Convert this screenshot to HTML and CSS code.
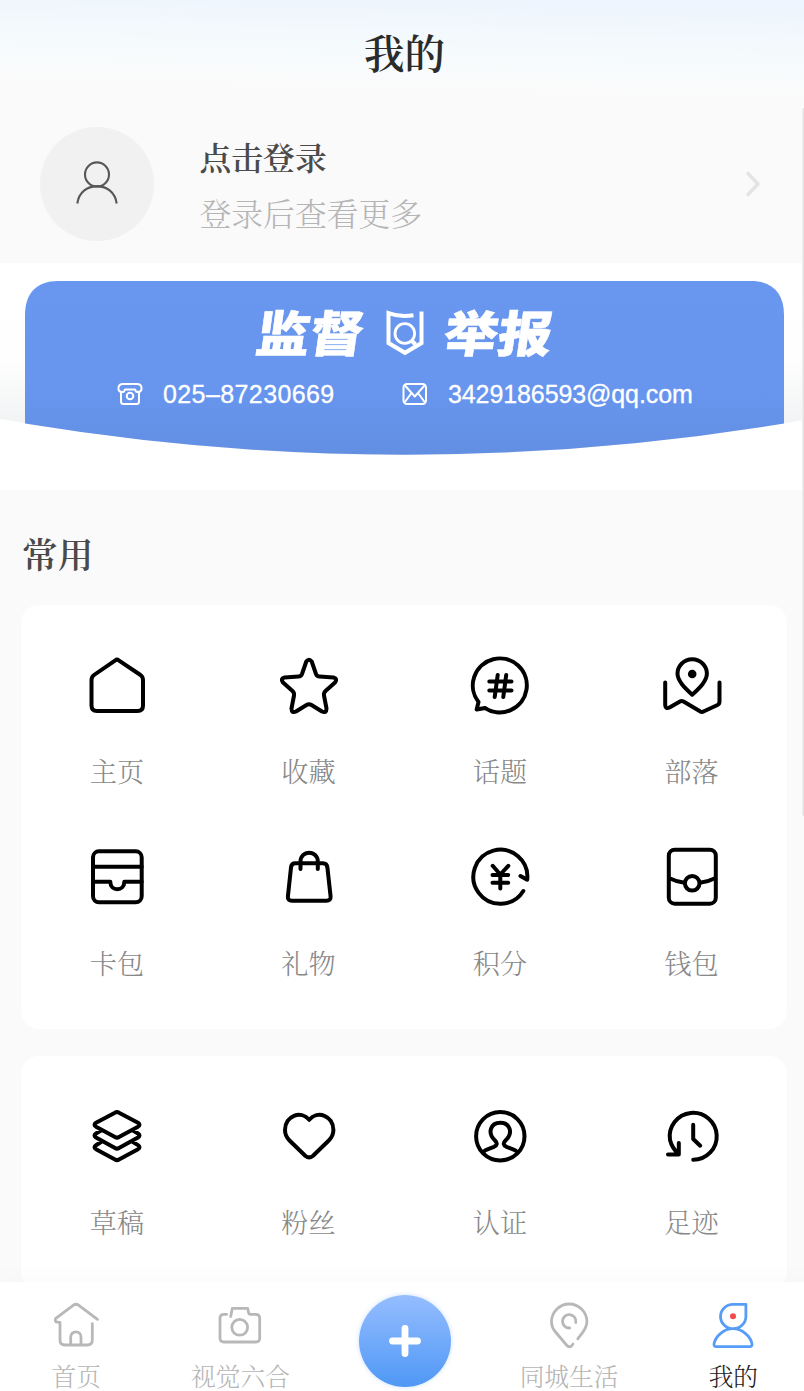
FILE: index.html
```html
<!DOCTYPE html>
<html lang="zh-CN">
<head>
<meta charset="utf-8">
<meta name="viewport" content="width=device-width, initial-scale=1">
<title>我的</title>
<link rel="stylesheet" href="styles.css">
</head>
<body>
<div class="app">
  <main class="page">
    <header class="header"><h1 class="header-title">我的</h1></header>

    <section class="profile">
      <div class="avatar">
        <svg width="48" height="48" viewBox="0 0 48 48"><circle cx="24" cy="14.4" r="12"/><path d="M4.3 43.5C6 32 14 26.4 24 26.4S42 32 43.7 43.5"/></svg>
      </div>
      <div class="profile-text">
        <div class="profile-name">点击登录</div>
        <div class="profile-hint">登录后查看更多</div>
      </div>
      <svg class="chevron" width="20" height="30" viewBox="0 0 20 30"><path d="M4 4.500 14 15 4 25.500"/></svg>
    </section>

    <section class="banner">
      <svg class="banner-bg" width="809" height="227" viewBox="0 0 809 227">
        <defs>
          <linearGradient id="blue" x1="0" y1="0" x2="0" y2="1"><stop offset="0" stop-color="#6997f0"/><stop offset=".6" stop-color="#6896ef"/><stop offset="1" stop-color="#628fe2"/></linearGradient>
          <linearGradient id="fade" x1="0" y1="0" x2="0" y2="1"><stop offset="0" stop-color="#fff"/><stop offset=".45" stop-color="#fefefe"/><stop offset="1" stop-color="#eceeef"/></linearGradient>
        </defs>
        <path fill="url(#fade)" d="M0 18H809V156Q404.500 228 0 156Z"/>
        <path fill="url(#blue)" d="M25 52C25 30 37 18 58 18H751C772 18 784 30 784 52V160.500Q594 191.700 404.500 191.700T25 160.500Z"/>
      </svg>
      <div class="banner-content">
        <div class="banner-title">
          <span class="slant">监督</span>
          <svg class="shield" width="40" height="48" viewBox="0 0 40 48"><path d="M28.500 6.200Q15 8.500 3.500 4.200V34L20 43.800 36.500 34V2.500"/><circle class="lens" cx="19.800" cy="24.500" r="9.800"/><path d="M26.500 31.500 30.500 35.500"/></svg>
          <span class="slant">举报</span>
        </div>
        <div class="banner-contacts">
          <svg width="26" height="24" viewBox="0 0 26 24"><path d="M4 10V19.500Q4 22 6.500 22H19.500Q22 22 22 19.500V10M3 9.500Q1 8.500 1.500 5.500 2 2 6 2H20Q24 2 24.500 5.500 25 8.500 23 9.500 21 10.500 19 9.500L18 7.500H8L7 9.500Q5 10.500 3 9.500Z"/><circle cx="13" cy="14" r="3.300"/></svg>
          <span class="phone">025–87230669</span>
          <svg width="26" height="24" viewBox="0 0 26 24"><rect x="1.500" y="2" width="22.500" height="20" rx="3.500"/><path d="M3 3.500 12.800 14.500 22.500 3.500M2.500 20.500 9.500 11M23 20.500 16 11"/></svg>
          <span class="mail">3429186593@qq.com</span>
        </div>
      </div>
    </section>

    <h2 class="section-title">常用</h2>

    <section class="card">
      <a class="item"><svg class="icon" viewBox="0 0 64 64"><path d="M30.300 6.300Q32 5 33.700 6.300L55.500 21Q58 22.800 58 26V51.500Q58 57 52.500 57H12Q6.500 57 6.500 51.500V26Q6.500 22.800 9 21Z"/></svg><span>主页</span></a>
      <a class="item"><svg class="icon" viewBox="0 0 64 64"><path d="M29.300 7.500Q32 4 34.700 7.500L39 20Q40 22.500 42.500 22.500L56.500 23.500Q61 24.500 58 28.500L48.500 37Q46.500 39 47 41.500L49.500 54.500Q49.500 59.500 45 57.500L34.500 51Q32 49.500 29.500 51L19 57.500Q14.500 59.500 14.500 54.500L17 41.500Q17.500 39 15.500 37L6 28.500Q3 24.500 7.500 23.500L21.500 22.500Q24 22.500 25 20Z"/></svg><span>收藏</span></a>
      <a class="item"><svg class="icon" viewBox="0 0 64 64"><path d="M17 54A27 27 0 1 0 10.500 48L8.700 55.500Z"/><path d="M21.300 27.500H43.500M21.300 36.500H43.500M29.700 21 26.700 43M38.200 21 35.300 43"/></svg><span>话题</span></a>
      <a class="item"><svg class="icon" viewBox="0 0 64 64"><path d="M32.200 40.700C25 34 17.500 27 17.500 19.500A14.700 14.200 0 0 1 46.900 19.500C46.900 27 39.500 34 32.200 40.700ZM5.200 28.500V51Q5.500 55.500 9.500 53.500L20 47.500Q21.500 46.500 23.500 47.500L40 57.300Q41.800 58.500 43.500 57.500L57.500 51Q59.500 50 59.500 47.500V28.500"/><circle class="solid" cx="32.200" cy="20" r="4.300"/></svg><span>部落</span></a>
      <a class="item"><svg class="icon" viewBox="0 0 64 64"><rect x="8" y="6.300" width="48.700" height="51" rx="6"/><path d="M8 21.700H56.700M8 36.700H25.300C25.300 46.800 39.300 46.800 39.300 36.700H56.700"/></svg><span>卡包</span></a>
      <a class="item"><svg class="icon" viewBox="0 0 64 64"><path d="M23.500 24V16.300A8.650 8.650 0 0 1 40.800 16.300V24M18.500 18.300H45.800Q50 18.300 50.400 22.500L53.600 51.500Q53.900 55.700 49.500 55.700H15Q10.500 55.700 10.900 51.500L14 22.500Q14.400 18.300 18.500 18.300Z"/></svg><span>礼物</span></a>
      <a class="item"><svg class="icon" viewBox="0 0 64 64"><path d="M55.300 46A27 27 0 1 1 59.200 34.800L52.500 31M24.700 20.800 32.300 29.500 40.300 20.800M32.300 29.500V43.500M24.500 30H40.200M24.500 37.700H40.200"/></svg><span>积分</span></a>
      <a class="item"><svg class="icon" viewBox="0 0 64 64"><rect x="8.800" y="4.700" width="47" height="54" rx="6"/><circle cx="32.200" cy="38.300" r="7.300"/><path d="M9.500 33.200Q17 37 24.500 37.700M55 33.200Q47.500 37 40 37.700"/></svg><span>钱包</span></a>
    </section>

    <section class="card">
      <a class="item"><svg class="icon" viewBox="0 0 64 64"><path d="M30 7.700Q32 6.500 34 7.700L53 17.700Q56 19.700 53 21.700L34 32Q32 33.300 30 32L11 21.700Q8 19.700 11 17.700ZM16 25.500 11 28.500Q8 30.500 11 32.500L30 43Q32 44.300 34 43L53 32.500Q56 30.500 53 28.500L48 25.500M16 37 11 40.200Q8 42.200 11 44.200L30 54.500Q32 55.800 34 54.500L53 44.200Q56 42.200 53 40.200L48 37"/></svg><span>草稿</span></a>
      <a class="item"><svg class="icon" viewBox="0 0 64 64"><path d="M32.200 14.800C24 5 8 10.500 8 25 8 29.500 9.500 32.500 12.500 35.500L28.500 51Q32.200 53.800 35.800 51L51.800 35.500C54.800 32.500 56.400 29.500 56.400 25 56.400 10.500 40.400 5 32.200 14.800Z"/></svg><span>粉丝</span></a>
      <a class="item"><svg class="icon" viewBox="0 0 64 64"><circle cx="32.300" cy="31.200" r="24.200"/><path d="M15.300 47C17 44.700 22 43.500 26 41.800 29.500 40 29.500 38 27 35.500 19 28 22.500 17.700 32.300 17.700S45.500 28 37.500 35.500C35 38 35 40 38.500 41.800 42.500 43.500 47.500 44.700 49.300 47"/></svg><span>认证</span></a>
      <a class="item"><svg class="icon" viewBox="0 0 64 64"><path d="M33.200 54.800A23.500 23.500 0 1 0 10 35Q12 43 18.500 49M18.800 38V49.500H8M33.200 19.800V34L40.200 40.700"/></svg><span>足迹</span></a>
    </section>
  </main>

  <i class="scroll-edge"></i>

  <nav class="tabbar">
    <a class="tab"><svg class="tab-icon" viewBox="0 0 56 56"><path d="M49.500 22.300 30.500 8.200Q28 6.300 25.500 8.200L7.500 21.700Q6.500 25 9.500 25.200L12 25.400V43Q12 48 17 48H39.300Q44.300 48 44.300 43V26.700M22.700 47.500V40A5.150 5.150 0 0 1 33 40V47.500"/></svg><span>首页</span></a>
    <a class="tab"><svg class="tab-icon" viewBox="0 0 56 56"><path d="M14.700 17.300H12Q8 17.300 8 21.300V41Q8 45 12 45H43.700Q47.700 45 47.700 41V21.300Q47.700 17.300 43.700 17.300H38.500Q36.800 17.300 36.500 15.300L35.700 11.300H20.300L18.700 19.500"/><circle cx="27.700" cy="30.300" r="7.900"/></svg><span>视觉六合</span></a>
    <a class="tab"><span class="plus"><svg width="36" height="36" viewBox="0 0 36 36"><path d="M5.500 18H30.500M18 5.500V30.500"/></svg></span></a>
    <a class="tab"><svg class="tab-icon" viewBox="0 0 56 56"><path d="M36.800 41.800C40 37.500 45.900 32 45.900 24.700A17.700 17.700 0 0 0 10.500 24.700C10.500 29 12 32 14.500 35L25.500 48Q28 51 30.500 49L32 47M34.800 25.500A6.700 6.700 0 1 0 28.700 31"/></svg><span>同城生活</span></a>
    <a class="tab active"><svg class="tab-icon" viewBox="0 0 56 56"><path d="M28 7.300H40.900V19.500A12.700 12.200 0 1 1 28 7.300ZM28 31.700C37 31.700 45.500 39 47 47Q47.300 49.700 44.500 49.700H11.500Q8.700 49.700 9 47C10.500 39 19 31.700 28 31.700Z"/><circle class="dot" cx="28" cy="19.300" r="3"/></svg><span>我的</span></a>
  </nav>
</div>
</body>
</html>
```

FILE: styles.css
```css
* { box-sizing: border-box; }

body {
  margin: 0;
  background: #fafafa;
  font-family: "Noto Serif CJK SC", "Noto Serif SC", "Noto Sans CJK SC", serif;
  font-weight: 300;
}

svg { display: block; flex: none; }
h1, h2 { margin: 0; }

.app {
  position: relative;
  width: 100%;
  height: 1391px;
  overflow: hidden;
  display: flex;
  flex-direction: column;
}

.page {
  width: 809px;
  flex: 1;
  min-height: 0;
  overflow: hidden;
}

.header {
  height: 106px;
  padding-bottom: 2px;
  display: flex;
  justify-content: center;
  align-items: center;
  background: linear-gradient(181.500deg, #ecf4ff 0, #eff6fd 20px, #f3f9fc 45px, #f8fbfc 78px, #fafafa 100px);
}

.header-title {
  font-size: 40.500px;
  line-height: 60px;
  font-weight: 600;
  color: #2b2b2b;
}

.profile {
  height: 157px;
  padding: 0 40px 2px;
  display: flex;
  align-items: center;
}

.avatar {
  width: 114px;
  height: 114px;
  border-radius: 50%;
  background: #f1f1f1;
  display: flex;
  align-items: center;
  justify-content: center;
}

.avatar svg {
  fill: none;
  stroke: #575757;
  stroke-width: 2.100;
}

.profile-text {
  flex: 1;
  margin-left: 45.500px;
  font-size: 31.800px;
}

.profile-name { line-height: 56px; font-weight: 600; color: #4a4a4a; }
.profile-hint { line-height: 56px; color: #b5b5b5; }

.chevron {
  margin-right: 5px;
  fill: none;
  stroke: #e4e4e4;
  stroke-width: 3.600;
  stroke-linecap: round;
  stroke-linejoin: round;
}

.banner {
  position: relative;
  height: 227px;
  background: #fff;
}

.banner-bg { position: absolute; inset: 0; }

.banner-content {
  position: relative;
  padding-top: 40px;
  color: #fff;
}

.banner-title {
  height: 60px;
  display: flex;
  align-items: center;
  justify-content: center;
  font: 900 54px/60px "Noto Sans CJK SC", sans-serif;
  -webkit-text-stroke: .600px #fff;
}

.slant { transform: translateY(-2px) skewX(-8deg) scaleY(.91); }

.shield {
  margin: 0 20px;
  fill: none;
  stroke: #fff;
  stroke-width: 4;
}

.lens { stroke-width: 2.800; }

.banner-contacts {
  height: 40px;
  margin-top: 11px;
  padding-left: 117px;
  display: flex;
  align-items: center;
  font: 400 25px/40px "Liberation Sans", sans-serif;
  -webkit-text-stroke: .300px #fff;
}

.banner-contacts svg {
  fill: none;
  stroke: #fff;
  stroke-width: 2;
  stroke-linejoin: round;
}

.phone { width: 259px; padding-left: 20px; letter-spacing: .400px; white-space: nowrap; }
.mail { padding-left: 20px; letter-spacing: -.100px; }

.section-title {
  height: 115px;
  padding: 35px 0 0 22px;
  font-size: 35.700px;
  line-height: 56px;
  font-weight: 600;
  color: #4a4a4a;
}

.card {
  width: 766px;
  margin: 0 0 27px 21.300px;
  padding: 20.500px 0;
  border-radius: 18px;
  background: #fff;
  display: grid;
  grid-template-columns: repeat(4, 1fr);
  grid-auto-rows: 191.500px;
}

.item {
  padding-top: 28px;
  display: flex;
  flex-direction: column;
  align-items: center;
  gap: 33.500px;
  font-size: 27.200px;
  line-height: 40px;
  color: #888;
}

.icon {
  width: 64px;
  height: 64px;
  fill: none;
  stroke: #000;
  stroke-width: 4;
  stroke-linecap: round;
  stroke-linejoin: round;
}

.solid { fill: #000; stroke: none; }

.scroll-edge {
  position: absolute;
  right: 0;
  top: 108px;
  width: 2px;
  height: 708px;
  border-radius: 2px 0 0 2px;
  background: linear-gradient(90deg, #f3f3f3, #dedede);
}

.tabbar {
  position: relative;
  height: 109.500px;
  flex: none;
  margin: 0 -11.500px 0 -6px;
  display: grid;
  grid-template-columns: repeat(5, 1fr);
  background: #fff;
  box-shadow: 0 -4px 24px rgba(0, 0, 0, .02);
}

.tab {
  padding-top: 15.500px;
  display: flex;
  flex-direction: column;
  align-items: center;
  gap: 8.500px;
  font-size: 24.700px;
  line-height: 27px;
  color: #b5b5b5;
}

.tab-icon {
  width: 56px;
  height: 56px;
  fill: none;
  stroke: #b8b8b8;
  stroke-width: 2.800;
  stroke-linecap: round;
  stroke-linejoin: round;
}

.active { color: #222; }
.active .tab-icon { stroke: #579df8; }
.active .dot { fill: #f34b4b; stroke: none; }

.plus {
  width: 92px;
  height: 92px;
  margin-top: -2.500px;
  border-radius: 50%;
  background: linear-gradient(180deg, #95bdff, #4f98f5);
  box-shadow: 0 0 5px rgba(90, 155, 250, .3);
  display: flex;
  align-items: center;
  justify-content: center;
}

.plus svg {
  fill: none;
  stroke: #fff;
  stroke-width: 6.800;
  stroke-linecap: round;
}
```
